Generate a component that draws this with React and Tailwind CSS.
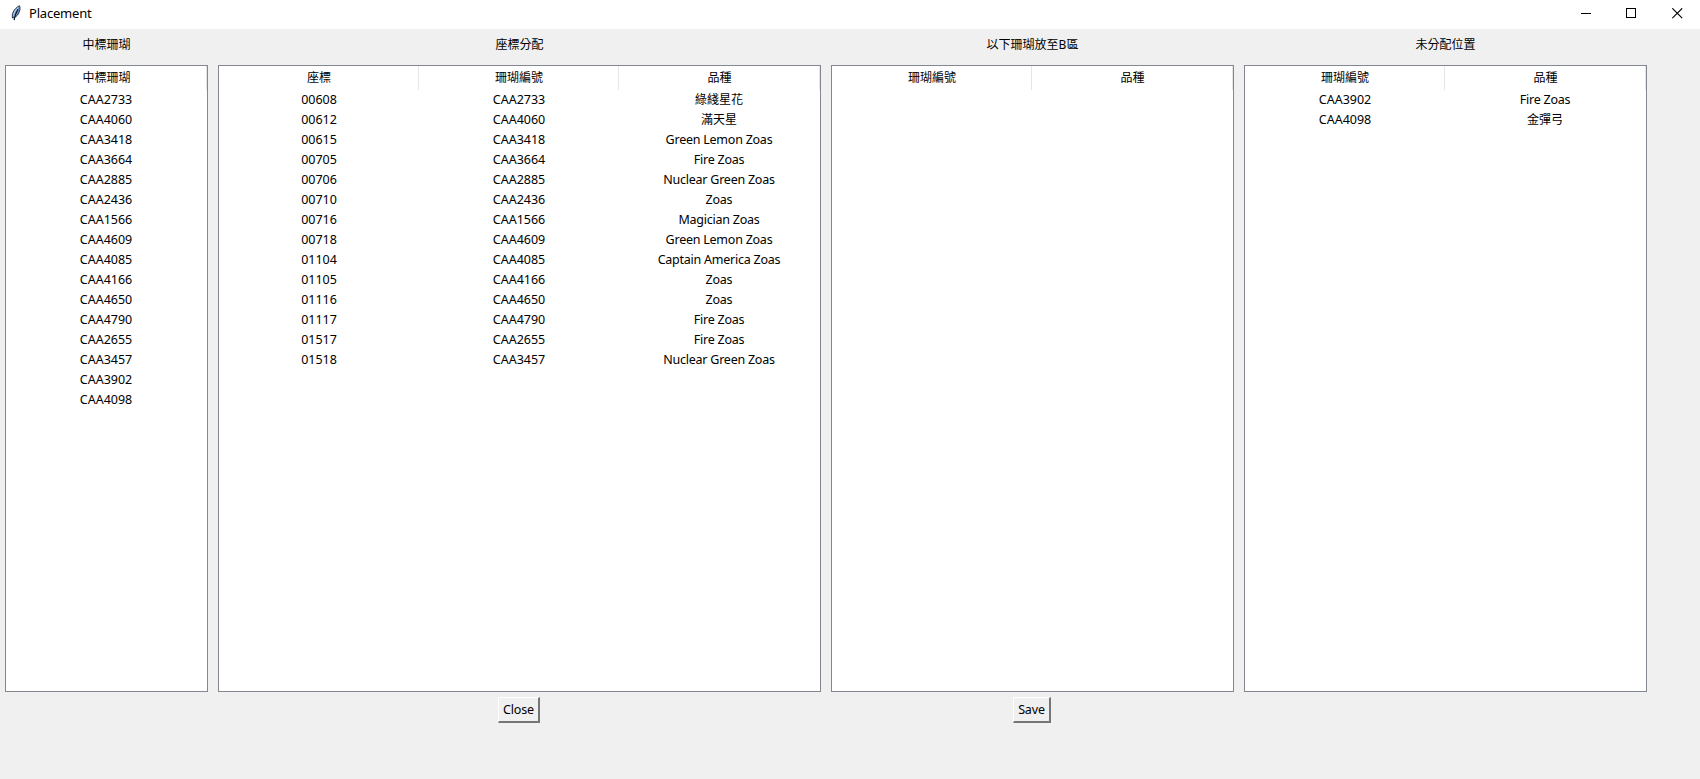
const WON = [
  'CAA2733', 'CAA4060', 'CAA3418', 'CAA3664', 'CAA2885', 'CAA2436', 'CAA1566', 'CAA4609',
  'CAA4085', 'CAA4166', 'CAA4650', 'CAA4790', 'CAA2655', 'CAA3457', 'CAA3902', 'CAA4098',
].map((id) => [id]);

const PLACED = [
  ['00608', 'CAA2733', '綠綫星花'],
  ['00612', 'CAA4060', '滿天星'],
  ['00615', 'CAA3418', 'Green Lemon Zoas'],
  ['00705', 'CAA3664', 'Fire Zoas'],
  ['00706', 'CAA2885', 'Nuclear Green Zoas'],
  ['00710', 'CAA2436', 'Zoas'],
  ['00716', 'CAA1566', 'Magician Zoas'],
  ['00718', 'CAA4609', 'Green Lemon Zoas'],
  ['01104', 'CAA4085', 'Captain America Zoas'],
  ['01105', 'CAA4166', 'Zoas'],
  ['01116', 'CAA4650', 'Zoas'],
  ['01117', 'CAA4790', 'Fire Zoas'],
  ['01517', 'CAA2655', 'Fire Zoas'],
  ['01518', 'CAA3457', 'Nuclear Green Zoas'],
];

const UNPLACED = [
  ['CAA3902', 'Fire Zoas'],
  ['CAA4098', '金彈弓'],
];

const PANELS = [
  { title: '中標珊瑚', width: 'w-[203px]', columns: ['中標珊瑚'], rows: WON },
  { title: '座標分配', width: 'w-[603px]', columns: ['座標', '珊瑚編號', '品種'], rows: PLACED, action: 'Close', actionWidth: 'w-[42px]' },
  { title: '以下珊瑚放至B區', width: 'w-[403px]', columns: ['珊瑚編號', '品種'], rows: [], action: 'Save', actionWidth: 'w-[38px]' },
  { title: '未分配位置', width: 'w-[403px]', columns: ['珊瑚編號', '品種'], rows: UNPLACED },
];

// Codes, Latin names and Chinese names each get their own size and tracking.
function cellStyle(text) {
  if (/^[A-Z]*\d+$/.test(text)) return 'text-[12.5px] tracking-[-0.02px]';
  if (/^[A-Za-z ]+$/.test(text)) return 'text-[12.5px] tracking-[-0.24px]';
  return 'text-[12px]';
}

function Feather() {
  return (
    <svg className="h-4 w-4" viewBox="0 0 16 16" fill="none">
      <path d="M4.500 13C3.600 9.500 5.200 4.200 11.400.7c1.200 2 .6 5.400-1 8.100-1.200 2.200-3.200 3.600-5.900 4.200z" fill="#6d93c4" stroke="#14233a" strokeWidth=".9" />
      <path d="M10.300 2.400C7.700 4.600 6 7.200 5.500 10.600" stroke="#c9dcf2" strokeWidth="1" />
      <path d="M10 4.200C8 7.400 6.800 10 6.100 15.200" stroke="#0b1220" strokeWidth="1.200" />
    </svg>
  );
}

function TitleBar() {
  return (
    <header className="flex h-[29px] items-center bg-white pl-2">
      <div className="pb-[3px]">
        <Feather />
      </div>
      <h1 className="ml-[5px] flex-1 pb-[3px] text-[13px] leading-5 tracking-[-0.2px]">Placement</h1>
      <div className="flex h-full items-center pb-[2px] text-black">
        <button className="flex h-full w-[45px] items-center justify-center pl-[2px]" aria-label="Minimize">
          <svg className="h-[11px] w-[11px]" viewBox="0 0 11 11" shapeRendering="crispEdges"><path d="M0 5.500h10" stroke="currentColor" /></svg>
        </button>
        <button className="flex h-full w-[45px] items-center justify-center pl-[2px]" aria-label="Maximize">
          <svg className="h-[11px] w-[11px]" viewBox="0 0 11 11" fill="none" shapeRendering="crispEdges"><path d="M.5.5h9v9h-9z" stroke="currentColor" /></svg>
        </button>
        <button className="flex h-full w-[47px] items-center justify-center pl-[2px]" aria-label="Close window">
          <svg className="h-[11px] w-[11px]" viewBox="0 0 11 11" fill="none"><path d="m.3.3 9.900 9.900M10.200.3.3 10.200" stroke="currentColor" strokeWidth="1.150" /></svg>
        </button>
      </div>
    </header>
  );
}

function Tree({ columns, rows }) {
  return (
    <div className="h-[627px] w-full border border-[#828790] bg-white">
      <div className="flex h-6">
        {columns.map((name) => (
          <div key={name} className="flex w-[200px] shrink-0 items-center justify-center border-r border-[#e5e5e5] pb-px pl-px last:w-[201px]">
            {name}
          </div>
        ))}
      </div>
      {rows.map((row) => (
        <div key={row.join()} className="flex h-5">
          {row.map((cell, i) => (
            <div key={i} className={`flex w-[200px] items-center justify-center whitespace-nowrap ${cellStyle(cell)}`}>
              {cell}
            </div>
          ))}
        </div>
      ))}
    </div>
  );
}

function Panel({ title, width, columns, rows, action, actionWidth }) {
  return (
    <section className={`flex flex-col items-center ${width}`}>
      <h2 className="flex h-9 items-center pb-[5px]">{title}</h2>
      <Tree columns={columns} rows={rows} />
      {action && (
        <button className={`mt-[5px] mr-px h-[26px] border-2 border-t border-l border-t-white border-l-white border-r-[#767676] border-b-[#767676] text-[12.5px] leading-[23px] tracking-[-0.15px] ${actionWidth}`}>
          {action}
        </button>
      )}
    </section>
  );
}

export default function App() {
  return (
    <div className="flex h-[779px] w-[1700px] flex-col overflow-hidden bg-[#f0f0f0] font-['Noto_Sans','Noto_Sans_CJK_TC',sans-serif] text-[12px] leading-5 text-black">
      <TitleBar />
      <main className="flex gap-[10px] pl-[5px]">
        {PANELS.map((panel) => (
          <Panel key={panel.title} {...panel} />
        ))}
      </main>
    </div>
  );
}
